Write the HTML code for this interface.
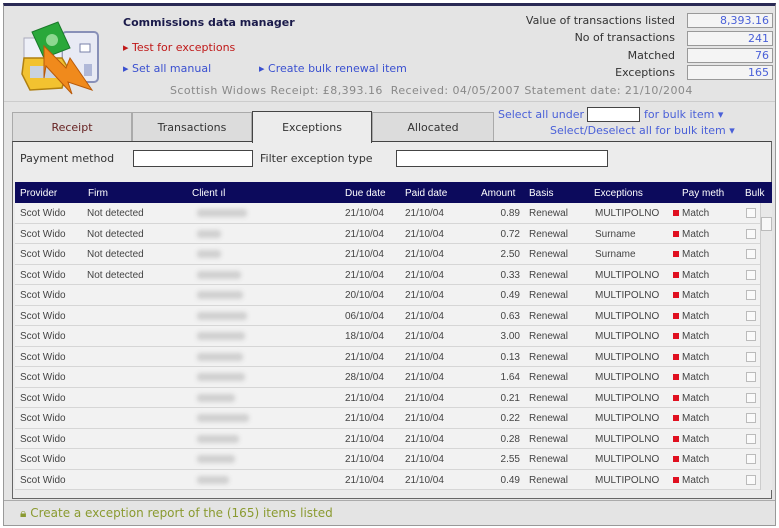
<!DOCTYPE html>
<html><head><meta charset="utf-8"><style>
*{margin:0;padding:0;box-sizing:border-box}
body{width:779px;height:528px;background:#fff;font-family:"DejaVu Sans","Liberation Sans",sans-serif;position:relative;overflow:hidden}
.a{position:absolute;white-space:nowrap}
.v{font-size:11px}
.t{font-family:"Liberation Sans",sans-serif;font-size:10px;color:#333}
.row{position:absolute;left:15px;width:745px;height:20.5px;border-bottom:1px solid #d6d6d6;background:#f2f2f2}
.row span{position:absolute;top:5px;font-family:"Liberation Sans",sans-serif;font-size:10px;color:#444;white-space:nowrap}
.blur{position:absolute;top:6px;height:8px;background:#d0d0d0;filter:blur(2px);border-radius:3px}
.rb{position:absolute;top:7px;width:6px;height:6px;background:#e01020}
.cb{position:absolute;top:5px;width:10px;height:10px;border:1px solid #bbb;background:#fafafa}
</style></head><body>
<div class="a" style="left:3px;top:3px;width:773px;height:523px;background:#e4e4e4;border:1px solid #999;border-top:3px solid #2a2a55"></div>
<svg class="a" style="left:18px;top:18px" width="86" height="80" viewBox="0 0 86 80">
<rect x="44" y="14" width="36" height="50" rx="4" fill="#e8eaf4" stroke="#8890b8" stroke-width="2"/>
<rect x="62" y="26" width="10" height="8" fill="#fff" stroke="#7880a8"/>
<rect x="66" y="46" width="8" height="12" fill="#b0b8d8"/>
<rect x="6" y="20" width="38" height="30" fill="#eef0f8" stroke="#aab"/>
<path d="M14 14 L40 4 L52 30 L26 40Z" fill="#2aa83a" stroke="#1a7a2a"/>
<circle cx="34" cy="22" r="6" fill="#8ed890"/>
<path d="M6 40 L44 40 L50 50 L44 70 L12 72 L4 56Z" fill="#f2c230" stroke="#b08010" stroke-width="1.5"/>
<rect x="12" y="48" width="26" height="12" fill="#c9d2e0"/>
<path d="M26 28 L48 50 L52 40 L74 72 L50 64 L54 76 L28 48 L26 60Z" fill="#f08a1c" stroke="#b85a0a"/>
</svg>
<div class="a" style="left:123px;top:16px;font-size:11px;font-weight:bold;color:#1a1a4a">Commissions data manager</div>
<div class="a v" style="left:123px;top:41px;color:#c01818">▸ Test for exceptions</div>
<div class="a v" style="left:123px;top:62px;color:#3a50d0">▸ Set all manual</div>
<div class="a v" style="left:259px;top:62px;color:#3a50d0">▸ Create bulk renewal item</div>
<div class="a v" style="left:170px;top:84px;color:#888;letter-spacing:0.45px">Scottish Widows Receipt: £8,393.16&nbsp; Received: 04/05/2007 Statement date: 21/10/2004</div>
<div class="a v" style="right:104px;top:14px;color:#333;text-align:right">Value of transactions listed</div>
<div class="a v" style="right:104px;top:31px;color:#333">No of transactions</div>
<div class="a v" style="right:104px;top:49px;color:#333">Matched</div>
<div class="a v" style="right:104px;top:66px;color:#333">Exceptions</div>
<div class="a v" style="left:687px;top:13px;width:86px;height:15px;border:1px solid #999;background:#f4f4f4;color:#4a60d8;text-align:right;padding-right:3px">8,393.16</div>
<div class="a v" style="left:687px;top:31px;width:86px;height:15px;border:1px solid #999;background:#f4f4f4;color:#4a60d8;text-align:right;padding-right:3px">241</div>
<div class="a v" style="left:687px;top:48px;width:86px;height:15px;border:1px solid #999;background:#f4f4f4;color:#4a60d8;text-align:right;padding-right:3px">76</div>
<div class="a v" style="left:687px;top:65px;width:86px;height:15px;border:1px solid #999;background:#f4f4f4;color:#4a60d8;text-align:right;padding-right:3px">165</div>
<div class="a" style="left:4px;top:101px;width:771px;height:1px;background:#ccc"></div>
<div class="a v" style="left:12px;top:112px;width:120px;height:30px;border:1px solid #aaa;border-bottom:none;background:#dcdcdc;color:#622;text-align:center;line-height:30px">Receipt</div>
<div class="a v" style="left:132px;top:112px;width:120px;height:30px;border:1px solid #aaa;border-bottom:none;background:#dcdcdc;color:#333;text-align:center;line-height:30px">Transactions</div>
<div class="a v" style="left:372px;top:112px;width:122px;height:30px;border:1px solid #aaa;border-bottom:none;background:#dcdcdc;color:#333;text-align:center;line-height:30px">Allocated</div>
<div class="a" style="left:12px;top:141px;width:760px;height:358px;border:1px solid #666;border-top:1px solid #444;background:#ececec"></div>
<div class="a v" style="left:252px;top:111px;width:120px;height:32px;border:1px solid #444;border-bottom:none;background:#ececec;color:#333;text-align:center;line-height:32px">Exceptions</div>
<div class="a v" style="left:498px;top:108px;color:#4a60d8">Select all under £</div>
<div class="a" style="left:587px;top:107px;width:53px;height:15px;background:#fff;border:1px solid #444"></div>
<div class="a v" style="left:644px;top:108px;color:#4a60d8">for bulk item ▾</div>
<div class="a v" style="left:550px;top:124px;color:#4a60d8">Select/Deselect all for bulk item ▾</div>
<div class="a v" style="left:20px;top:152px;color:#333">Payment method</div>
<div class="a" style="left:133px;top:150px;width:120px;height:17px;background:#fff;border:1px solid #444"></div>
<div class="a v" style="left:260px;top:152px;color:#333">Filter exception type</div>
<div class="a" style="left:396px;top:150px;width:212px;height:17px;background:#fff;border:1px solid #444"></div>
<div class="a" style="left:15px;top:182px;width:757px;height:21px;background:#0c0a5c"></div>
<div class="a t" style="left:20px;top:188px;color:#fff">Provider</div>
<div class="a t" style="left:88px;top:188px;color:#fff">Firm</div>
<div class="a t" style="left:192px;top:188px;color:#fff">Client ıl</div>
<div class="a t" style="left:345px;top:188px;color:#fff">Due date</div>
<div class="a t" style="left:405px;top:188px;color:#fff">Paid date</div>
<div class="a t" style="left:481px;top:188px;color:#fff">Amount</div>
<div class="a t" style="left:529px;top:188px;color:#fff">Basis</div>
<div class="a t" style="left:594px;top:188px;color:#fff">Exceptions</div>
<div class="a t" style="left:682px;top:188px;color:#fff">Pay meth</div>
<div class="a t" style="left:745px;top:188px;color:#fff">Bulk</div>
<div id="rows"></div>
<div class="a" style="left:760px;top:203px;width:12px;height:287px;background:#e8e8e8;border-left:1px solid #ccc"></div>
<div class="a" style="left:761px;top:217px;width:11px;height:14px;background:#f8f8f8;border:1px solid #bbb"></div>
<div class="a" style="left:4px;top:500px;width:771px;height:1px;background:#aaa"></div>
<div class="a" style="left:20px;top:506px;font-size:12px;color:#8a9a30">🔒︎ Create a exception report of the (165) items listed</div>
<script>
var d=[["Not detected","21/10/04","0.89","MULTIPOLNO",1,50],["Not detected","21/10/04","0.72","Surname",1,24],["Not detected","21/10/04","2.50","Surname",0,24],["Not detected","21/10/04","0.33","MULTIPOLNO",1,44],["","20/10/04","0.49","MULTIPOLNO",0,46],["","06/10/04","0.63","MULTIPOLNO",0,50],["","18/10/04","3.00","MULTIPOLNO",0,48],["","21/10/04","0.13","MULTIPOLNO",0,46],["","28/10/04","1.64","MULTIPOLNO",0,48],["","21/10/04","0.21","MULTIPOLNO",0,38],["","21/10/04","0.22","MULTIPOLNO",0,52],["","21/10/04","0.28","MULTIPOLNO",0,42],["","21/10/04","2.55","MULTIPOLNO",0,38],["","21/10/04","0.49","MULTIPOLNO",0,32]];
var h="";d.forEach(function(r,i){h+='<div class="row" style="top:'+(203+i*20.5)+'px"><span style="left:5px">Scot Wido</span><span style="left:72px">'+r[0]+'</span><div class="blur" style="left:182px;width:'+r[5]+'px"></div><span style="left:330px">'+r[1]+'</span><span style="left:390px">21/10/04</span><span style="right:240px">'+r[2]+'</span><span style="left:514px">Renewal</span><span style="left:580px">'+r[3]+'</span><div class="rb" style="left:658px"></div><span style="left:667px">Match</span><div class="cb" style="left:731px"></div></div>'});
document.getElementById("rows").innerHTML=h;
</script>
</body></html>
